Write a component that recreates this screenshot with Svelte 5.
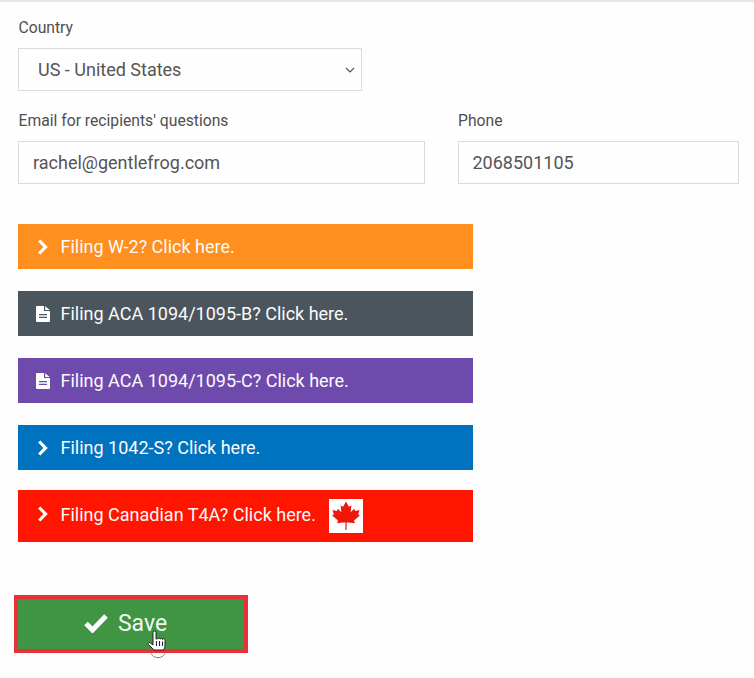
<script>
  const bars = [
    { label: 'Filing W-2? Click here.', tone: 'orange', icon: 'chevron' },
    { label: 'Filing ACA 1094/1095-B? Click here.', tone: 'slate', icon: 'file' },
    { label: 'Filing ACA 1094/1095-C? Click here.', tone: 'purple', icon: 'file' },
    { label: 'Filing 1042-S? Click here.', tone: 'blue', icon: 'chevron' },
    { label: 'Filing Canadian T4A? Click here.', tone: 'red', icon: 'chevron', flag: true }
  ];
</script>

<div class="page">
  <div class="rule"></div>

  <div class="field country">
    <label for="country">Country</label>
    <div class="box select" id="country">
      <span>US - United States</span>
      <svg class="caret" viewBox="0 0 10 6" width="10" height="6"><path d="M1 1l4 4 4-4" fill="none" stroke="#555" stroke-width="1.2"/></svg>
    </div>
  </div>

  <div class="row">
    <div class="field email">
      <label for="email">Email for recipients' questions</label>
      <div class="box" id="email">rachel@gentlefrog.com</div>
    </div>
    <div class="field phone">
      <label for="phone">Phone</label>
      <div class="box" id="phone">2068501105</div>
    </div>
  </div>

  <div class="bars">
    {#each bars as bar}
      <div class="bar {bar.tone}">
        <span class="icon">
          {#if bar.icon === 'chevron'}
            <svg viewBox="0 0 12 16" width="12" height="16"><path d="M2.200 1.500l6.300 6.500-6.300 6.500" fill="none" stroke="#fff" stroke-width="3.200"/></svg>
          {:else}
            <svg viewBox="0 0 14 16" width="14" height="16"><path fill="#fff" fill-rule="evenodd" d="M0 1a1 1 0 0 1 1-1H8v5h6v10a1 1 0 0 1-1 1H1a1 1 0 0 1-1-1zM3 8v1.300h8V8zM3 10.800v1.300h8v-1.300zM9.200 0.300l4.600 3.600H9.200z"/></svg>
          {/if}
        </span>
        <span>{bar.label}</span>
        {#if bar.flag}
          <span class="flag">
            <svg viewBox="0 0 34 34" width="34" height="34">
              <rect width="34" height="34" fill="#fff"/>
              <path fill="#f0160a" d="M17 2.500l2.900 5.200 2.500-1.100-0.800 6.600 3.600-3.500 1 2.200 4.300-0.800-1.300 4.400 1.700 1-5.900 5.100 0.900 2.600-6-0.800H17.600v7.500h-1.200v-7.500h-2.300l-6 0.800 0.900-2.600-5.900-5.100 1.700-1-1.300-4.400 4.300 0.800 1-2.200 3.600 3.500-0.800-6.600 2.500 1.100z"/>
            </svg>
          </span>
        {/if}
      </div>
    {/each}
  </div>

  <button class="save" type="button">
    <svg viewBox="0 0 24 20" width="24" height="20"><path d="M2 10.500l6.500 6.500L22 3" fill="none" stroke="#fff" stroke-width="5"/></svg>
    <span>Save</span>
  </button>

  <svg class="cursor" viewBox="0 0 22 30" width="22" height="30">
    <path d="M5 23.500A8 8 0 0 0 19 23.500" fill="none" stroke="#666" stroke-width="0.800"/>
    <path fill="#fff" stroke="#222" stroke-width="1" d="M7 2.500a1.500 1.500 0 0 1 3 0V9l1.800-.2a1.300 1.300 0 0 1 2.400.3 1.300 1.300 0 0 1 2.400.4 1.300 1.300 0 0 1 2.400 1V15c0 2.500-.8 3.500-1.300 5H8L2.500 14.500c-1-1.500.8-2.800 2-1.500L7 15z"/>
    <path d="M10.500 11v5M13.500 11v5M16.500 11.500v4.500" stroke="#222" stroke-width="1.100"/>
  </svg>
</div>

<style>
  :global(body) {
    margin: 0;
    background: #fefefe;
  }
  .page {
    position: relative;
    height: 678px;
    overflow: hidden;
    font-family: Roboto, "Liberation Sans", sans-serif;
    color: #4a4a4a;
  }
  .rule {
    height: 2px;
    background: #e6e6e6;
  }
  .field {
    display: flex;
    flex-direction: column;
  }
  label {
    font-size: 15.700px;
    line-height: 20px;
    margin-bottom: 10px;
    color: #4f4f4f;
  }
  .country {
    width: 343.500px;
    margin: 16px 0 0 18.500px;
  }
  .box {
    box-sizing: border-box;
    height: 43px;
    margin-left: -0.500px;
    display: flex;
    align-items: center;
    padding: 0 14px;
    border: 1.500px solid #dadada;
    background: #fefefe;
    font-size: 18px;
    color: #555;
  }
  .select {
    justify-content: space-between;
    padding: 0 6px 0 19px;
  }
  .row {
    display: flex;
    gap: 33.500px;
    margin: 20px 0 0 18.500px;
  }
  .email { width: 406px; }
  .phone { width: 280.500px; }
  .bars {
    display: flex;
    flex-direction: column;
    margin: 40px 0 0 18px;
    width: 454.500px;
    gap: 22px;
  }
  .bar {
    height: 45px;
    display: flex;
    align-items: center;
    color: #fbfbfb;
    font-size: 18px;
  }
  .icon {
    width: 42px;
    display: flex;
    justify-content: center;
    padding-left: 7px;
    margin-right: 0.500px;
    box-sizing: border-box;
  }
  .orange { background: #ff8f1f; }
  .slate { background: #4a555e; }
  .purple { background: #6f4aad; }
  .blue { background: #0073c0; }
  .red {
    background: #ff1500;
    box-sizing: border-box;
    height: 52px;
    padding-bottom: 4px;
    margin-top: -2px;
  }
  .flag {
    display: flex;
    margin: 4px 0 0 13.500px;
  }
  .save {
    box-sizing: border-box;
    display: flex;
    align-items: center;
    justify-content: center;
    gap: 10px;
    width: 234px;
    height: 58px;
    margin: 53px 0 0 14px;
    padding: 0 11px 2px 0;
    background: #3f9543;
    border: 4px solid #e8323a;
    color: #f2f7f2;
    font-family: inherit;
    font-size: 23px;
  }
  .cursor {
    position: absolute;
    left: 146px;
    top: 630px;
  }
</style>
